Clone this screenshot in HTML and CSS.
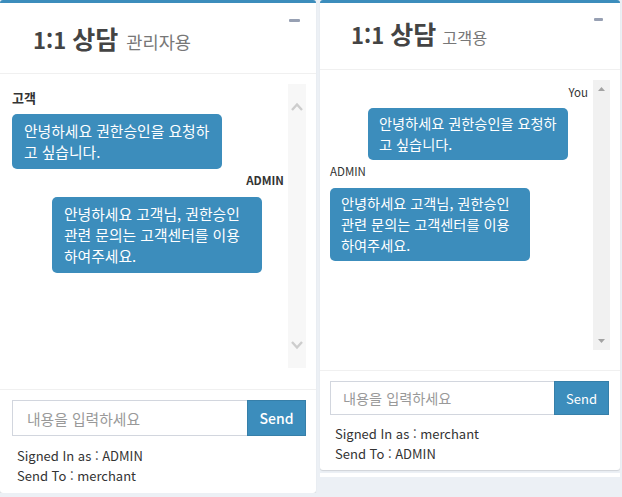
FILE: index.html
```html
<!DOCTYPE html>
<html lang="ko">
<head>
<meta charset="utf-8">
<title>1:1 상담</title>
<link rel="stylesheet" href="styles.css">
</head>
<body>
<div class="page">
  <section class="box box-admin">
    <header class="box-header">
      <h3 class="box-title">1:1 <span class="ko">상담</span><small class="box-sub">관리자용</small></h3>
      <span class="tool-minus"></span>
    </header>
    <div class="box-body">
      <div class="messages">
        <div class="msg">
          <div class="msg-name bold ko-name">고객</div>
          <div class="bubble">안녕하세요 권한승인을 요청하고 싶습니다.</div>
        </div>
        <div class="msg msg-right">
          <div class="msg-name bold">ADMIN</div>
          <div class="bubble">안녕하세요 고객님, 권한승인 관련 문의는 고객센터를 이용하여주세요.</div>
        </div>
      </div>
      <div class="scroll-fake">
        <svg class="chev" width="12" height="9" viewBox="0 0 12 9"><polyline points="1,8 6,2.5 11,8" fill="none" stroke="#cdcdcd" stroke-width="2.4"/></svg>
        <svg class="chev" width="12" height="9" viewBox="0 0 12 9"><polyline points="1,1 6,6.5 11,1" fill="none" stroke="#cdcdcd" stroke-width="2.4"/></svg>
      </div>
    </div>
    <footer class="box-footer">
      <div class="input-row">
        <input class="msg-input" type="text" placeholder="내용을 입력하세요">
        <button class="send-btn" type="button">Send</button>
      </div>
      <div class="info">
        <div>Signed In as : ADMIN</div>
        <div>Send To : merchant</div>
      </div>
    </footer>
  </section>

  <div class="col-right">
    <section class="box box-user">
      <header class="box-header">
        <h3 class="box-title">1:1 <span class="ko">상담</span><small class="box-sub">고객용</small></h3>
        <span class="tool-minus"></span>
      </header>
      <div class="box-body">
        <div class="messages">
          <div class="msg msg-right">
            <div class="msg-name">You</div>
            <div class="bubble">안녕하세요 권한승인을 요청하고 싶습니다.</div>
          </div>
          <div class="msg">
            <div class="msg-name">ADMIN</div>
            <div class="bubble">안녕하세요 고객님, 권한승인 관련 문의는 고객센터를 이용하여주세요.</div>
          </div>
        </div>
        <div class="scroll-native">
          <svg width="7" height="4" viewBox="0 0 7 4"><polygon points="0,4 3.5,0 7,4" fill="#a3a3a3"/></svg>
          <svg width="7" height="4" viewBox="0 0 7 4"><polygon points="0,0 3.5,4 7,0" fill="#a3a3a3"/></svg>
        </div>
      </div>
      <footer class="box-footer">
        <div class="input-row">
          <input class="msg-input" type="text" placeholder="내용을 입력하세요">
          <button class="send-btn" type="button">Send</button>
        </div>
        <div class="info">
          <div>Signed In as : merchant</div>
          <div>Send To : ADMIN</div>
        </div>
      </footer>
    </section>
    <div class="box-next"></div>
  </div>
</div>
</body>
</html>
```
FILE: styles.css
```css
html, body {
  margin: 0;
  padding: 0;
}
body {
  background: #ecf0f5;
  font-family: "Noto Sans CJK KR", "Noto Sans", sans-serif;
  color: #333;
}
.page {
  display: flex;
  align-items: flex-start;
  gap: 4px;
}
.box {
  background: #fff;
  border-top: 3px solid #3c8dbc;
  border-radius: 3px;
  box-shadow: 0 1px 1px rgba(0, 0, 0, 0.12);
}
.box-admin { width: 316px; }
.col-right { width: 300px; }
.box-user { width: 300px; }

.box-header {
  display: flex;
  justify-content: space-between;
  align-items: flex-start;
  border-bottom: 1px solid #f0f0f0;
  box-sizing: border-box;
}
.box-title {
  margin: 0;
  font-weight: 700;
  color: #444;
  font-size: 22px;
  line-height: 32px;
  white-space: nowrap;
}
.box-sub {
  font-weight: 400;
  color: #777;
  margin-left: 6px;
}
.tool-minus {
  display: block;
  width: 11px;
  height: 3px;
  border-radius: 1px;
  background: #97a0b3;
  margin-top: 16px;
}
.box-admin .box-header { height: 71px; padding: 0 16px 0 33px; }
.box-admin .box-title { padding-top: 19px; }
.box-admin .box-title .ko { font-size: 25px; }
.box-admin .box-sub { font-size: 17.6px; margin-left: 8px; }
.box-user .box-header { height: 67px; padding: 0 17px 0 31px; }
.box-user .box-title { padding-top: 14px; }
.box-user .box-title .ko { font-size: 25px; }
.box-user .box-sub { font-size: 16.3px; }
.box-user .tool-minus { width: 9px; margin-top: 15px; }

.box-body {
  display: flex;
  align-items: flex-start;
  border-bottom: 1px solid #f0f0f0;
  box-sizing: border-box;
}
.messages { flex: 1; }
.msg-name {
  font-size: 11.5px;
  line-height: 17px;
  color: #333;
}
.msg-name.ko-name { font-size: 13px; }
.msg-name.bold { font-weight: 700; }
.msg-right .msg-name { text-align: right; }
.bubble {
  background: #3c8dbc;
  color: #fff;
  border-radius: 5px;
  box-sizing: border-box;
  line-height: 21px;
}
.msg-right .bubble { margin-left: auto; }
.msg + .msg { margin-top: 3px; }

.box-admin .box-body { height: 316px; padding: 10px 10px 0 12px; }
.box-admin .messages { padding: 5px 4px 0 0; }
.box-admin .msg-name { margin-bottom: 8px; }
.box-admin .bubble {
  width: 210px;
  padding: 6px 11px 7px 12px;
  font-size: 14.8px;
}
.box-admin .msg-right .bubble { margin-right: 22px; }

.box-user .box-body { height: 301px; padding: 10px 10px 0 10px; }
.box-user .messages { padding: 4px 5px 0 0; }
.box-user .msg-name { margin-bottom: 7px; }
.box-user .msg + .msg .msg-name { margin-bottom: 8px; }
.box-user .bubble {
  width: 200px;
  padding: 5px 10.5px 5px 11px;
  font-size: 14.2px;
}
.box-user .msg-right .bubble { margin-right: 20px; }

.scroll-fake {
  width: 18px;
  height: 284px;
  background: #f7f7f7;
  display: flex;
  flex-direction: column;
  justify-content: space-between;
  align-items: center;
  padding: 18px 0;
  box-sizing: border-box;
}
.chev { display: block; }
.scroll-native {
  width: 17px;
  height: 270px;
  background: #f1f1f1;
  display: flex;
  flex-direction: column;
  justify-content: space-between;
  align-items: center;
  padding: 7px 0;
  box-sizing: border-box;
}
.scroll-native svg { display: block; }

.input-row { display: flex; }
.msg-input {
  flex: 1;
  min-width: 0;
  margin: 0;
  border: 1px solid #d2d6de;
  border-right: 0;
  background: #fff;
  font-family: "Noto Sans CJK KR", "Noto Sans", sans-serif;
  color: #555;
  outline: none;
  box-sizing: border-box;
}
.msg-input::placeholder { color: #999; }
.send-btn {
  margin: 0;
  border: 1px solid #367fa9;
  background: #3c8dbc;
  color: #fff;
  font-family: "Noto Sans CJK KR", "Noto Sans", sans-serif;
  padding: 0;
  box-sizing: border-box;
}
.info {
  line-height: 20px;
  font-size: 13px;
  color: #333;
  padding-left: 5px;
}
.box-admin .box-footer { padding: 10px 10px 7px 12px; }
.box-admin .input-row { height: 36px; }
.box-admin .msg-input { padding: 0 14px; font-size: 14.8px; }
.box-admin .send-btn { width: 59px; font-size: 14px; font-weight: 500; }
.box-admin .info { margin-top: 10px; }

.box-user .box-footer { padding: 10px 11px 6px 10px; }
.box-user .input-row { height: 34px; }
.box-user .msg-input { padding: 0 12px; font-size: 14.2px; }
.box-user .send-btn { width: 55px; font-size: 13px; font-weight: 400; }
.box-user .info { margin-top: 9px; }

.box-next {
  margin-top: 3px;
  height: 4px;
  background: #fff;
}
```
